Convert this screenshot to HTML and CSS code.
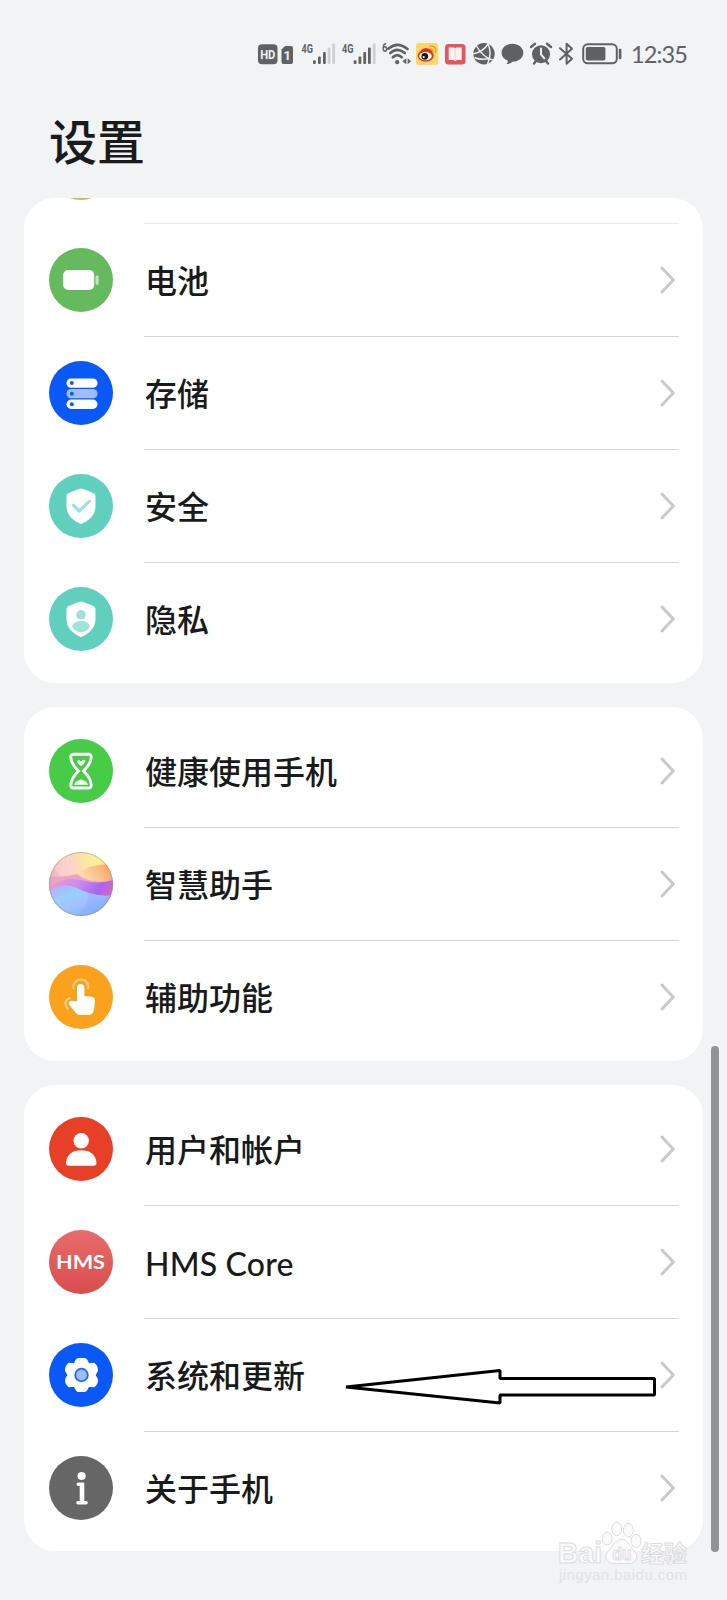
FILE: index.html
```html
<!DOCTYPE html>
<html lang="zh-CN">
<head>
  <meta charset="UTF-8" />
  <meta name="viewport" content="width=device-width, initial-scale=1.0"/>
  <title>设置</title>
  <link rel="stylesheet" href="styles.css">
</head>
<body>
  <svg class="defs" width="0" height="0">
    <symbol id="chevron" viewBox="0 0 16 28">
      <path d="M2 2 L13.3 14 L2 26" fill="none" stroke="#c9c9ca" stroke-width="2.9" stroke-linecap="round" stroke-linejoin="round"/>
    </symbol>
    <symbol id="shield" viewBox="0 0 64 64">
      <path d="M32 14.5 C34 14.5 43 18.5 45 19.5 Q46.5 20.3 46.5 22 V32 C46.5 41 40 47 32 50 C24 47 17.5 41 17.5 32 V22 Q17.5 20.3 19 19.5 C21 18.5 30 14.5 32 14.5 Z" fill="#fff"/>
    </symbol>
  </svg>

  <div class="status-bar">
    <svg width="24" height="28">
      <rect x="1" y="4.3" width="19.5" height="20" rx="4" fill="#5f6264"/>
      <text x="3.2" y="19" class="badge-text" textLength="15.2" lengthAdjust="spacingAndGlyphs">HD</text>
    </svg>
    <svg width="20" height="28">
      <path d="M4 6 H10 Q12 6 12 8 V22 Q12 24 10 24 H2.5 Q.5 24 .5 22 V9.5 Z" fill="#5f6264"/>
      <text x="2.6" y="19.6" class="badge-text">1</text>
    </svg>
    <svg width="40" height="28">
      <text x="0.5" y="12.6" class="net-text" textLength="11.5" lengthAdjust="spacingAndGlyphs">4G</text>
      <g fill="#5f6264">
        <rect x="12" y="20.3" width="2.8" height="3.7" rx="1"/>
        <rect x="17" y="16.5" width="2.8" height="7.5" rx="1"/>
        <rect x="22" y="12" width="2.8" height="12" rx="1"/>
      </g>
      <g fill="#cdcfd1">
        <rect x="26.6" y="7.5" width="2.8" height="16.5" rx="1"/>
        <rect x="31.3" y="3.5" width="2.8" height="20.5" rx="1"/>
      </g>
    </svg>
    <svg width="41" height="28">
      <text x="1" y="12.6" class="net-text" textLength="11.5" lengthAdjust="spacingAndGlyphs">4G</text>
      <g fill="#5f6264">
        <rect x="12.7" y="20.3" width="2.8" height="3.7" rx="1"/>
        <rect x="17.5" y="16.5" width="2.8" height="7.5" rx="1"/>
        <rect x="22.3" y="12" width="2.8" height="12" rx="1"/>
        <rect x="27" y="7.5" width="2.8" height="16.5" rx="1"/>
      </g>
      <rect x="31.8" y="3.5" width="2.8" height="20.5" rx="1" fill="#cdcfd1"/>
    </svg>
    <svg width="34" height="28">
      <text x="0" y="11.6" class="net-text" textLength="5.5" lengthAdjust="spacingAndGlyphs">6</text>
      <circle cx="15.2" cy="22.2" r="2.1" fill="#5f6264"/>
      <g fill="none" stroke="#5f6264" stroke-width="2.6" stroke-linecap="round">
        <path d="M6.3 8.7 Q15.600 .8 25.500 9"/>
        <path d="M8.2 13.100 Q15.3 6.5 22.8 13.100"/>
        <path d="M10.8 17.3 Q15.2 13 19.8 17.3"/>
      </g>
      <path d="M24.3 18.2 V24.3 L20.3 21.2 Z M25.6 18.2 V24.3 L29 21.2 Z" fill="#5f6264"/>
    </svg>
    <svg width="29" height="28">
      <rect x="0" y="3" width="22" height="22" rx="2.5" fill="#fbd866"/>
      <ellipse cx="9.7" cy="15.8" rx="8" ry="6" fill="#d8342a"/>
      <path d="M3 14 Q5 8 10 8 L15 9.5 L17 13 Z" fill="#d8342a"/>
      <ellipse cx="9.5" cy="16.2" rx="6.2" ry="4.1" fill="#fff"/>
      <circle cx="8.8" cy="16.3" r="3.4" fill="#26140f"/>
      <circle cx="7.7" cy="17" r="1.1" fill="#fff"/>
      <path d="M14 9 Q17.5 9 17 12.5 M13.8 6 Q20.5 5.3 19.8 12.3" fill="none" stroke="#f09c28" stroke-width="1.4" stroke-linecap="round"/>
    </svg>
    <svg width="28" height="28">
      <rect x="0" y="4" width="20.5" height="20.5" rx="3.5" fill="#e4555c"/>
      <path d="M3.7 7.5 H8.5 Q10.2 7.5 10.2 8.5 Q10.2 7.5 12 7.5 H16.7 V20 H12 L10.2 21 L8.5 20 H3.7 Z" fill="#fff0f1"/>
      <path d="M10.2 8 V20.5" stroke="#f9d3d6" stroke-width="1"/>
    </svg>
    <svg width="28" height="28">
      <circle cx="11" cy="13.7" r="10.7" fill="#5f6264"/>
      <path d="M3.500 6 Q10 17.500 20 20 M0 14 Q10 12 15.500 3.5 M15 4 Q19.500 13 14.5 24 M1.500 17.500 Q8 20.500 16 18.500" fill="none" stroke="#f1f2f4" stroke-width="1.400"/>
    </svg>
    <svg width="29" height="28">
      <path d="M11.3 3.8 C17.5 3.8 22.3 7.7 22.3 12.7 C22.3 17.8 17.8 21.5 12 21.5 Q9.5 24 5.5 24 Q7.3 22 6.6 20.5 C2.8 19 .6 16.2 .6 12.7 C.6 7.7 5.2 3.8 11.3 3.8 Z" fill="#5f6264"/>
    </svg>
    <svg width="28" height="28">
      <circle cx="11" cy="14.2" r="9" fill="#5f6264"/>
      <path d="M1 7 L5 3.8 M21 7 L17 3.8 M4 23.5 L6 21 M18 23.5 L16 21" stroke="#5f6264" stroke-width="2.4" stroke-linecap="round"/>
      <path d="M11 8.5 V14.5 L14.3 18.3" fill="none" stroke="#f1f2f4" stroke-width="2" stroke-linecap="round"/>
    </svg>
    <svg width="24" height="28">
      <path d="M2 8.2 L14 18.8 L8.6 23.8 V3.8 L14 8.7 L2 19.5" fill="none" stroke="#5f6264" stroke-width="2" stroke-linecap="round" stroke-linejoin="round"/>
    </svg>
    <svg width="49" height="28">
      <rect x="1.2" y="4.3" width="33.6" height="19" rx="4.5" fill="none" stroke="#5f6264" stroke-width="2"/>
      <rect x="3.8" y="7" width="19.6" height="13.6" rx="1.8" fill="#5f6264"/>
      <rect x="36.8" y="8.8" width="2.6" height="10.4" rx="1" fill="#5f6264"/>
    </svg>
    <span class="clock">12:35</span>
  </div>

  <h1>设置</h1>

  <main>
    <section class="card card-cut">
      <div class="row-cut">
        <svg class="icon" viewBox="0 0 64 64"><circle cx="32" cy="32" r="32" fill="#e9ab4c"/></svg>
      </div>
      <div class="row">
        <svg class="icon" viewBox="0 0 64 64">
          <circle cx="32" cy="32" r="32" fill="#64ba5c"/>
          <rect x="14.2" y="22" width="31" height="20" rx="5" fill="#fff"/>
          <rect x="46.5" y="27.5" width="3.2" height="9.3" rx="1.4" fill="#c1e3be"/>
        </svg>
        <span class="label">电池</span>
        <svg class="chevron"><use href="#chevron"/></svg>
      </div>
      <div class="row">
        <svg class="icon" viewBox="0 0 64 64">
          <circle cx="32" cy="32" r="32" fill="#0a59f7"/>
          <rect x="17.5" y="17.5" width="31" height="9.3" rx="4.6" fill="#fff"/>
          <rect x="17.5" y="28" width="31" height="9.3" rx="4.6" fill="#9dbdfc"/>
          <rect x="17.5" y="38.6" width="31" height="9.3" rx="4.6" fill="#fff"/>
          <g fill="#0a59f7">
            <circle cx="22.8" cy="22.1" r="2"/>
            <circle cx="22.8" cy="32.7" r="2"/>
            <circle cx="22.8" cy="43.2" r="2"/>
          </g>
        </svg>
        <span class="label">存储</span>
        <svg class="chevron"><use href="#chevron"/></svg>
      </div>
      <div class="row">
        <svg class="icon" viewBox="0 0 64 64">
          <circle cx="32" cy="32" r="32" fill="#61cfbe"/>
          <use href="#shield"/>
          <path d="M24.5 31.5 L30.3 37 L40.3 27.3" fill="none" stroke="#a0e2d8" stroke-width="3.2" stroke-linecap="round" stroke-linejoin="round"/>
        </svg>
        <span class="label">安全</span>
        <svg class="chevron"><use href="#chevron"/></svg>
      </div>
      <div class="row">
        <svg class="icon" viewBox="0 0 64 64">
          <circle cx="32" cy="32" r="32" fill="#61cfbe"/>
          <use href="#shield"/>
          <circle cx="32" cy="27.8" r="4.8" fill="#a0e2d8"/>
          <path d="M23 39.5 Q25 34 32 34 Q39 34 41 39.5 Q38 45 32 45.3 Q26 45 23 39.5 Z" fill="#a0e2d8"/>
        </svg>
        <span class="label">隐私</span>
        <svg class="chevron"><use href="#chevron"/></svg>
      </div>
    </section>

    <section class="card">
      <div class="row">
        <svg class="icon" viewBox="0 0 64 64">
          <circle cx="32" cy="32" r="32" fill="#47cc47"/>
          <path d="M24.5 15.3 H39.5 Q42.5 15.3 42.2 18.5 Q41.8 25 34.5 32 Q41.8 39 42.2 45.8 Q42.5 49 39.5 49 H24.5 Q21.5 49 21.8 45.8 Q22.2 39 29.5 32 Q22.2 25 21.8 18.5 Q21.5 15.3 24.5 15.3 Z" fill="none" stroke="#fff" stroke-width="2.9"/>
          <path d="M28 22 Q30 20.500 32 22.500 Q34 19.500 36.500 21.500 Q36.500 24.5 32 27 Q28 24.5 28 22 Z M25 45.7 Q26 42.5 30 41.3 Q32 39.5 34 41.3 Q38 42.5 39 45.7 Z" fill="#fff"/>
        </svg>
        <span class="label">健康使用手机</span>
        <svg class="chevron"><use href="#chevron"/></svg>
      </div>
      <div class="row">
        <svg class="icon" viewBox="0 0 64 64">
          <defs>
            <linearGradient id="skyTop" x1="0" y1=".2" x2="1" y2="0">
              <stop offset="0" stop-color="#f3b4c6"/>
              <stop offset=".4" stop-color="#fbdcb4"/>
              <stop offset=".75" stop-color="#fdf095"/>
              <stop offset="1" stop-color="#f9c77c"/>
            </linearGradient>
            <linearGradient id="hill" x1="0" y1=".3" x2="1" y2="0">
              <stop offset="0" stop-color="#fbdcae"/>
              <stop offset=".6" stop-color="#fab87f"/>
              <stop offset="1" stop-color="#f7955f"/>
            </linearGradient>
            <linearGradient id="band" x1="0" y1="0" x2="1" y2=".2">
              <stop offset="0" stop-color="#ee9fc0"/>
              <stop offset=".5" stop-color="#c98af0"/>
              <stop offset=".85" stop-color="#a765ee"/>
              <stop offset="1" stop-color="#c867cc"/>
            </linearGradient>
            <linearGradient id="sea" x1="0" y1="0" x2=".8" y2="1">
              <stop offset="0" stop-color="#bda6fb"/>
              <stop offset=".35" stop-color="#97d0ff"/>
              <stop offset=".6" stop-color="#a4c1ff"/>
              <stop offset="1" stop-color="#66b8fa"/>
            </linearGradient>
            <clipPath id="ball"><circle cx="32" cy="32" r="32"/></clipPath>
          </defs>
          <g clip-path="url(#ball)">
            <rect width="64" height="64" fill="url(#skyTop)"/>
            <circle cx="17" cy="14" r="11" fill="#fbd3d2" opacity=".6"/>
            <path d="M0 24 Q14 26 28 22 L64 26 V64 H0 Z" fill="#eda3c2"/>
            <path d="M28 22 Q40 12 64 12 V27 Q44 34 28 22 Z" fill="url(#hill)"/>
            <path d="M0 36 Q14 24 32 28 Q48 33 64 28 V48 H0 Z" fill="url(#band)"/>
            <path d="M0 39 Q14 30 26 35 Q46 46 64 43 V64 H0 Z" fill="url(#sea)"/>
            <path d="M40 42 Q52 46 64 43 V64 H28 Q38 56 40 42 Z" fill="#8fa4fb" opacity=".35"/>
          </g>
          <circle cx="32" cy="32" r="31.5" fill="none" stroke="#a58a80" stroke-opacity=".5"/>
        </svg>
        <span class="label">智慧助手</span>
        <svg class="chevron"><use href="#chevron"/></svg>
      </div>
      <div class="row">
        <svg class="icon" viewBox="0 0 64 64">
          <circle cx="32" cy="32" r="32" fill="#faa21e"/>
          <path d="M24.5 23.5 A7.5 7.5 0 1 1 39.2 23.5 M20.5 33.2 Q16.3 34.5 16.6 38.7 Q16.8 41.5 18.8 43.8" fill="none" stroke="#fcd08c" stroke-width="2" stroke-linecap="round"/>
          <path d="M28 36 V22.7 A3.7 3.7 0 0 1 35.4 22.7 V31 L42.5 31.8 Q46.2 32.3 46 36 L45 44 Q44 50 39.5 50 H31 Q28.5 50 26.5 47.5 L20.3 40 Q19 37.5 21 36.3 Q22.5 35.5 24.5 36 Z" fill="#fff"/>
        </svg>
        <span class="label">辅助功能</span>
        <svg class="chevron"><use href="#chevron"/></svg>
      </div>
    </section>

    <section class="card card-last">
      <div class="row">
        <svg class="icon" viewBox="0 0 64 64">
          <circle cx="32" cy="32" r="32" fill="#e84026"/>
          <circle cx="32.2" cy="23.7" r="7.7" fill="#fff"/>
          <path d="M17 45.5 C18 37 24 33.3 32.2 33.3 C40.5 33.3 46.5 37 47.5 45.5 Q47.6 48.7 44.5 48.7 H20 Q16.9 48.7 17 45.5 Z" fill="#fff"/>
        </svg>
        <span class="label">用户和帐户</span>
        <svg class="chevron"><use href="#chevron"/></svg>
      </div>
      <div class="row">
        <svg class="icon" viewBox="0 0 64 64">
          <defs>
            <linearGradient id="hms" x1="0" y1="0" x2="0" y2="1">
              <stop offset="0" stop-color="#e86d6a"/>
              <stop offset="1" stop-color="#d94d4d"/>
            </linearGradient>
          </defs>
          <circle cx="32" cy="32" r="32" fill="url(#hms)"/>
          <text x="7" y="39.2" class="hms-text" textLength="49" lengthAdjust="spacingAndGlyphs">HMS</text>
        </svg>
        <span class="label label-latin">HMS Core</span>
        <svg class="chevron"><use href="#chevron"/></svg>
      </div>
      <div class="row">
        <svg class="icon" viewBox="0 0 64 64">
          <circle cx="32" cy="32" r="32" fill="#0a59f7"/>
          <path d="M29.3 16 H35.7 Q38 17 39.2 21.3 L45 20.8 Q48 23 48 27.500 L45.500 32 L48 36.500 Q48 41 45 43.200 L39.2 42.700 Q38 47 35.7 48 H29.3 Q27 47 25.8 42.700 L20 43.200 Q17 41 17 36.500 L19.500 32 L17 27.500 Q17 23 20 20.8 L25.8 21.3 Q27 17 29.3 16 Z" fill="#fff" stroke="#fff" stroke-width="2" stroke-linejoin="round"/>
          <circle cx="32.5" cy="32" r="6.3" fill="#9dbdfc" stroke="#2468ee" stroke-width="1.8"/>
        </svg>
        <span class="label">系统和更新</span>
        <svg class="chevron"><use href="#chevron"/></svg>
        <svg class="arrow" viewBox="0 0 314 38">
          <path d="M3 19 L157 2.5 V10.5 H311.5 V27 H157 V35 Z" fill="#fff" stroke="#000" stroke-width="3" stroke-linejoin="bevel"/>
        </svg>
      </div>
      <div class="row">
        <svg class="icon" viewBox="0 0 64 64">
          <circle cx="32" cy="32" r="32" fill="#666"/>
          <circle cx="32.6" cy="20" r="4.1" fill="#fff"/>
          <path d="M29.3 28.3 H33.2 V46.7 M29 46.7 H37" fill="none" stroke="#fff" stroke-width="3.6" stroke-linecap="round"/>
          <path d="M33 27 V46" stroke="#fff" stroke-width="4.6"/>
        </svg>
        <span class="label">关于手机</span>
        <svg class="chevron"><use href="#chevron"/></svg>
      </div>
    </section>
  </main>

  <div class="scrollbar"></div>

  <svg class="watermark" viewBox="0 0 140 74">
    <g fill="#fafafb" stroke="#dcdddf" stroke-width="1">
      <ellipse cx="58.7" cy="17" rx="5" ry="6.7"/>
      <ellipse cx="49.200" cy="26.500" rx="5" ry="6.5"/>
      <ellipse cx="70.300" cy="18" rx="5" ry="6.7"/>
      <ellipse cx="78" cy="29" rx="5" ry="6.5"/>
      <path d="M63.500 27.500 C70 27.500 71 33 75 37.500 C82 44 78 51.500 71 51.500 H56 C48 51.500 45 44 51.500 37.500 C56 33 57 27.500 63.500 27.500 Z"/>
    </g>
    <text x="0" y="51" class="wm-bai" textLength="44" lengthAdjust="spacingAndGlyphs">Bai</text>
    <text x="54.500" y="48" class="wm-du" textLength="19" lengthAdjust="spacingAndGlyphs">du</text>
    <text x="83" y="50" class="wm-cjk" textLength="46">经验</text>
    <text x="1" y="68" class="wm-url" textLength="128">jingyan.baidu.com</text>
  </svg>
</body>
</html>
```

FILE: styles.css
```css
:root {
  --bg: #f1f3f5;
  --card: #fff;
  --text: #191a1b;
  --status: #5f6264;
  --line: #d6d7d8;
}
* {
  margin: 0;
  padding: 0;
  box-sizing: border-box;
}
body {
  font-family: "Noto Sans CJK SC", sans-serif;
  background: var(--bg);
  color: var(--text);
  height: 1600px;
  position: relative;
  overflow: hidden;
}
.defs {
  position: absolute;
}
.status-bar {
  display: flex;
  height: 68px;
  padding: 40px 0 0 257px;
}
.status-bar svg {
  flex: none;
}
.badge-text {
  font: bold 13px Roboto, sans-serif;
  fill: #f1f3f5;
}
.net-text {
  font: bold 13.5px Roboto, sans-serif;
  fill: var(--status);
}
.clock {
  font: 23.5px/29px Lato, sans-serif;
  letter-spacing: -0.9px;
  color: var(--status);
}
h1 {
  height: 130px;
  padding-left: 49px;
  font-size: 48px;
  font-weight: 500;
  line-height: 142px;
}
main {
  display: flex;
  flex-direction: column;
  gap: 24px;
  padding: 0 24px;
}
.card {
  background: var(--card);
  border-radius: 31px;
  padding: 8px 24px 7px;
}
.card-cut {
  padding-top: 0;
  overflow: hidden;
}
.card-last {
  padding-bottom: 6px;
}
.row-cut {
  position: relative;
  height: 26px;
  display: flex;
  align-items: flex-end;
  padding-bottom: 24.5px;
}
.row {
  position: relative;
  display: flex;
  align-items: center;
  height: 113px;
  padding-bottom: 2px;
}
.card-last .row {
  padding-bottom: 1px;
}
.row::after,
.row-cut::after {
  content: "";
  position: absolute;
  left: 96px;
  right: 0;
  bottom: 0;
  height: 1px;
  background: var(--line);
}
.row-cut::after {
  background: #ebebec;
}
.row:last-child::after {
  display: none;
}
.icon {
  flex: none;
  width: 64px;
  height: 64px;
  margin: 0 32.5px 0 0.5px;
}
.label {
  flex: 1;
  font-size: 32px;
  font-weight: 500;
  line-height: 46px;
  padding-bottom: 2px;
}
.label-latin {
  font-family: Lato, sans-serif;
  letter-spacing: 0.2px;
  padding: 3px 0 0;
}
.chevron {
  width: 16px;
  height: 28px;
  margin-right: 3px;
}
.arrow {
  position: absolute;
  left: 295px;
  top: 49px;
  width: 314px;
  height: 38px;
}
.hms-text {
  font: bold 19px Lato, sans-serif;
  fill: #fff;
}
.scrollbar {
  position: absolute;
  left: 711px;
  top: 1046px;
  width: 8px;
  height: 506px;
  border-radius: 4px;
  background: #919294;
}
.watermark {
  position: absolute;
  left: 558px;
  top: 1512px;
  width: 140px;
  height: 74px;
}
.watermark text {
  fill: #fafafb;
  stroke: #dcdddf;
  stroke-width: 1px;
}
.wm-bai, .wm-du {
  font-family: "Liberation Sans", sans-serif;
  font-weight: bold;
}
.wm-bai {
  font-size: 30px;
}
.wm-du {
  font-size: 18px;
}
.wm-cjk {
  font-size: 23px;
  font-weight: bold;
}
.watermark .wm-url {
  font: 15px "Liberation Sans", sans-serif;
  fill: #e1e2e4;
  stroke: none;
}
```
